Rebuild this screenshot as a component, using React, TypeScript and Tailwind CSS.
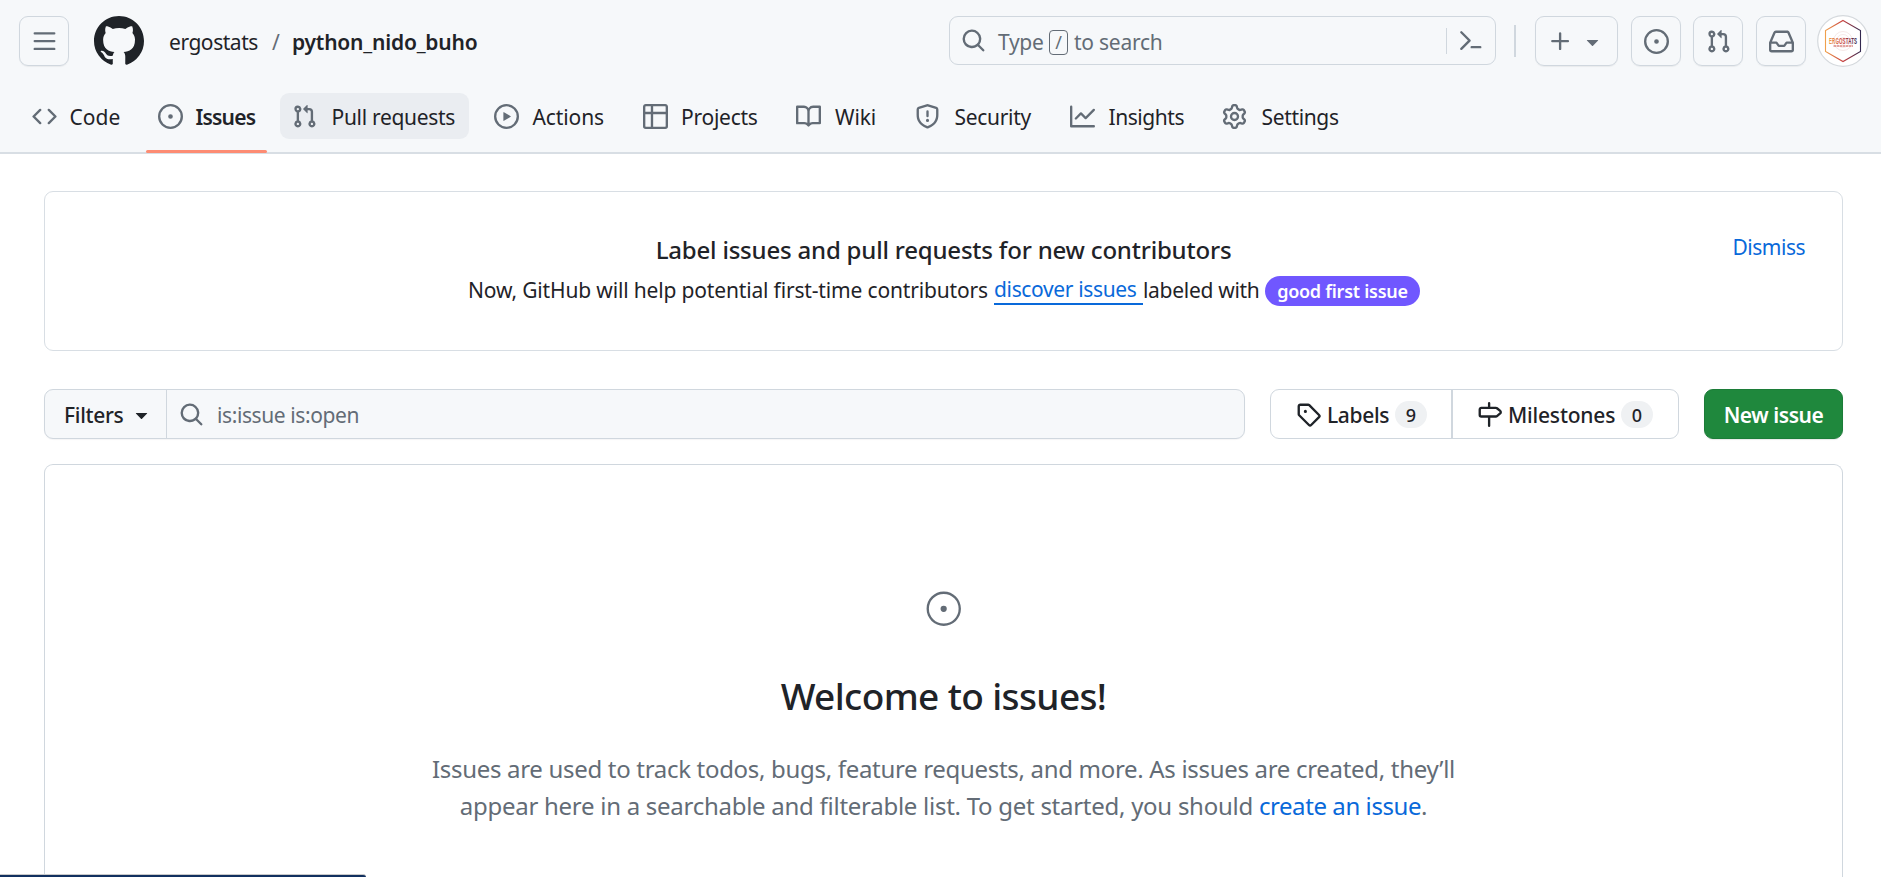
import type { ReactNode } from "react";

const paths = {
  menu: "M1 2.75A.75.75 0 0 1 1.75 2h12.5a.75.75 0 0 1 0 1.5H1.75A.75.75 0 0 1 1 2.75Zm0 5A.75.75 0 0 1 1.75 7h12.5a.75.75 0 0 1 0 1.5H1.75A.75.75 0 0 1 1 7.75ZM1.75 12h12.5a.75.75 0 0 1 0 1.5H1.75a.75.75 0 0 1 0-1.5Z",
  github: "M8 0c4.42 0 8 3.58 8 8a8.013 8.013 0 0 1-5.45 7.59c-.4.08-.55-.17-.55-.38 0-.27.01-1.13.01-2.2 0-.75-.25-1.23-.54-1.48 1.78-.2 3.65-.88 3.65-3.95 0-.88-.31-1.59-.82-2.15.08-.2.36-1.02-.08-2.12 0 0-.67-.22-2.2.82-.64-.18-1.32-.27-2-.27-.68 0-1.36.09-2 .27-1.53-1.03-2.2-.82-2.2-.82-.44 1.1-.16 1.92-.08 2.12-.51.56-.82 1.28-.82 2.15 0 3.06 1.86 3.75 3.64 3.95-.23.2-.44.55-.51 1.07-.46.21-1.61.55-2.33-.66-.15-.24-.6-.83-1.23-.82-.67.01-.27.38.01.53.34.19.73.9.82 1.13.16.45.68 1.31 2.69.94 0 .67.01 1.3.01 1.49 0 .21-.15.45-.55.38A7.995 7.995 0 0 1 0 8c0-4.42 3.58-8 8-8Z",
  code: "m11.28 3.22 4.25 4.25a.75.75 0 0 1 0 1.06l-4.25 4.25a.749.749 0 0 1-1.275-.326.749.749 0 0 1 .215-.734L13.94 8l-3.72-3.72a.749.749 0 0 1 .326-1.275.749.749 0 0 1 .734.215Zm-6.56 0a.751.751 0 0 1 1.042.018.751.751 0 0 1 .018 1.042L2.06 8l3.72 3.72a.749.749 0 0 1-.326 1.275.749.749 0 0 1-.734-.215L.47 8.53a.75.75 0 0 1 0-1.06Z",
  issue: "M8 9.5a1.5 1.5 0 1 0 0-3 1.5 1.5 0 0 0 0 3ZM8 0a8 8 0 1 1 0 16A8 8 0 0 1 8 0ZM1.5 8a6.5 6.5 0 1 0 13 0 6.5 6.5 0 0 0-13 0Z",
  pull: "M1.5 3.25a2.25 2.25 0 1 1 3 2.122v5.256a2.251 2.251 0 1 1-1.5 0V5.372A2.25 2.25 0 0 1 1.5 3.25Zm5.677-.177L9.573.677A.25.25 0 0 1 10 .854V2.5h1A2.5 2.5 0 0 1 13.5 5v5.628a2.251 2.251 0 1 1-1.5 0V5a1 1 0 0 0-1-1h-1v1.646a.25.25 0 0 1-.427.177L7.177 3.427a.25.25 0 0 1 0-.354ZM3.75 2.5a.75.75 0 1 0 0 1.5.75.75 0 0 0 0-1.5Zm0 9.5a.75.75 0 1 0 0 1.5.75.75 0 0 0 0-1.5Zm8.25.75a.75.75 0 1 0 1.5 0 .75.75 0 0 0-1.5 0Z",
  play: "M8 0a8 8 0 1 1 0 16A8 8 0 0 1 8 0ZM1.5 8a6.5 6.5 0 1 0 13 0 6.5 6.5 0 0 0-13 0Zm4.879-2.773 4.264 2.559a.25.25 0 0 1 0 .428l-4.264 2.559A.25.25 0 0 1 6 10.559V5.442a.25.25 0 0 1 .379-.215Z",
  table: "M0 1.75C0 .784.784 0 1.75 0h12.5C15.216 0 16 .784 16 1.75v12.5A1.75 1.75 0 0 1 14.25 16H1.75A1.75 1.75 0 0 1 0 14.25ZM6.5 6.5v8h7.75a.25.25 0 0 0 .25-.25V6.5Zm8-1.5V1.75a.25.25 0 0 0-.25-.25H6.5V5Zm-13 1.5v7.75c0 .138.112.25.25.25H5v-8ZM5 5V1.5H1.75a.25.25 0 0 0-.25.25V5Z",
  book: "M0 1.75A.75.75 0 0 1 .75 1h4.253c1.227 0 2.317.59 3 1.501A3.743 3.743 0 0 1 11.006 1h4.245a.75.75 0 0 1 .75.75v10.5a.75.75 0 0 1-.75.75h-4.507a2.25 2.25 0 0 0-1.591.659l-.622.621a.75.75 0 0 1-1.06 0l-.622-.621A2.25 2.25 0 0 0 5.258 13H.75a.75.75 0 0 1-.75-.75Zm7.251 10.324.004-5.073-.002-2.253A2.25 2.25 0 0 0 5.003 2.5H1.5v9h3.757a3.75 3.75 0 0 1 1.994.574ZM8.755 4.75l-.004 7.322a3.752 3.752 0 0 1 1.992-.572H14.5v-9h-3.495a2.25 2.25 0 0 0-2.25 2.25Z",
  shield: "M7.467.133a1.748 1.748 0 0 1 1.066 0l5.25 1.68A1.75 1.75 0 0 1 15 3.48V7c0 1.566-.32 3.182-1.303 4.682-.983 1.498-2.585 2.813-5.032 3.855a1.697 1.697 0 0 1-1.33 0c-2.447-1.042-4.049-2.357-5.032-3.855C1.32 10.182 1 8.566 1 7V3.48a1.75 1.75 0 0 1 1.217-1.667Zm.61 1.429a.25.25 0 0 0-.153 0l-5.25 1.68a.25.25 0 0 0-.174.238V7c0 1.358.275 2.666 1.057 3.86.784 1.194 2.121 2.34 4.366 3.297a.196.196 0 0 0 .154 0c2.245-.956 3.582-2.104 4.366-3.298C13.225 9.666 13.5 8.36 13.5 7V3.48a.251.251 0 0 0-.174-.237l-5.25-1.68ZM8.75 4.75v3a.75.75 0 0 1-1.5 0v-3a.75.75 0 0 1 1.5 0ZM9 10.5a1 1 0 1 1-2 0 1 1 0 0 1 2 0Z",
  graph: "M1.5 1.75V13.5h13.75a.75.75 0 0 1 0 1.5H.75a.75.75 0 0 1-.75-.75V1.75a.75.75 0 0 1 1.5 0Zm14.28 2.53-5.25 5.25a.75.75 0 0 1-1.06 0L7 7.06 4.28 9.78a.751.751 0 0 1-1.042-.018.751.751 0 0 1-.018-1.042l3.25-3.25a.75.75 0 0 1 1.06 0L10 7.94l4.72-4.72a.751.751 0 0 1 1.042.018.751.751 0 0 1 .018 1.042Z",
  gear: "M8 0a8.2 8.2 0 0 1 .701.031C9.444.095 9.99.645 10.16 1.29l.288 1.107c.018.066.079.158.212.224.231.114.454.243.668.386.123.082.233.09.299.071l1.103-.303c.644-.176 1.392.021 1.82.63.27.385.506.792.704 1.218.315.675.111 1.422-.364 1.891l-.814.806c-.049.048-.098.147-.088.294.016.257.016.515 0 .772-.01.147.038.246.088.294l.814.806c.475.469.679 1.216.364 1.891a7.977 7.977 0 0 1-.704 1.217c-.428.61-1.176.807-1.82.63l-1.102-.302c-.067-.019-.177-.011-.3.071a5.909 5.909 0 0 1-.668.386c-.133.066-.194.158-.211.224l-.29 1.106c-.168.646-.715 1.196-1.458 1.26a8.006 8.006 0 0 1-1.402 0c-.743-.064-1.289-.614-1.458-1.26l-.289-1.106c-.018-.066-.079-.158-.212-.224a5.738 5.738 0 0 1-.668-.386c-.123-.082-.233-.09-.299-.071l-1.103.303c-.644.176-1.392-.021-1.82-.63a8.12 8.12 0 0 1-.704-1.218c-.315-.675-.111-1.422.363-1.891l.815-.806c.05-.048.098-.147.088-.294a6.214 6.214 0 0 1 0-.772c.01-.147-.038-.246-.088-.294l-.815-.806C.635 6.045.431 5.298.746 4.623a7.92 7.92 0 0 1 .704-1.217c.428-.61 1.176-.807 1.82-.63l1.102.302c.067.019.177.011.3-.071.214-.143.437-.272.668-.386.133-.066.194-.158.211-.224l.29-1.106C6.009.645 6.556.095 7.299.03 7.53.01 7.764 0 8 0Zm-.571 1.525c-.036.003-.108.036-.137.146l-.289 1.105c-.147.561-.549.967-.998 1.189-.173.086-.34.183-.5.29-.417.278-.97.423-1.529.27l-1.103-.303c-.109-.03-.175.016-.195.045-.22.312-.412.644-.573.99-.014.031-.021.11.059.19l.815.806c.411.406.562.957.53 1.456a4.709 4.709 0 0 0 0 .582c.032.499-.119 1.05-.53 1.456l-.815.806c-.081.08-.073.159-.059.19.162.346.353.677.573.989.02.03.085.076.195.046l1.102-.303c.56-.153 1.113-.008 1.53.27.161.107.328.204.501.29.447.222.85.629.997 1.189l.289 1.105c.029.109.101.143.137.146a6.6 6.6 0 0 0 1.142 0c.036-.003.108-.036.137-.146l.289-1.105c.147-.561.549-.967.998-1.189.173-.086.34-.183.5-.29.417-.278.97-.423 1.529-.27l1.103.303c.109.029.175-.016.195-.045.22-.313.411-.644.573-.99.014-.031.021-.11-.059-.19l-.815-.806c-.411-.406-.562-.957-.53-1.456a4.709 4.709 0 0 0 0-.582c-.032-.499.119-1.05.53-1.456l.815-.806c.081-.08.073-.159.059-.19a6.464 6.464 0 0 0-.573-.989c-.02-.03-.085-.076-.195-.046l-1.102.303c-.56.153-1.113.008-1.53-.27a4.44 4.44 0 0 0-.501-.29c-.447-.222-.85-.629-.997-1.189l-.289-1.105c-.029-.11-.101-.143-.137-.146a6.6 6.6 0 0 0-1.142 0ZM11 8a3 3 0 1 1-6 0 3 3 0 0 1 6 0ZM9.5 8a1.5 1.5 0 1 0-3.001.001A1.5 1.5 0 0 0 9.5 8Z",
  search: "M10.68 11.74a6 6 0 0 1-7.922-8.982 6 6 0 0 1 8.982 7.922l3.04 3.04a.749.749 0 0 1-.326 1.275.749.749 0 0 1-.734-.215ZM11.5 7a4.499 4.499 0 1 0-8.997 0A4.499 4.499 0 0 0 11.5 7Z",
  inbox: "M2.8 2.06A1.75 1.75 0 0 1 4.41 1h7.18c.7 0 1.333.417 1.61 1.06l2.74 6.395c.04.093.06.194.06.295v4.5A1.75 1.75 0 0 1 14.25 15H1.75A1.75 1.75 0 0 1 0 13.25v-4.5c0-.101.02-.202.06-.295Zm1.61.44a.25.25 0 0 0-.23.152L1.887 8H4.75a.75.75 0 0 1 .6.3L6.625 10h2.75l1.275-1.7a.75.75 0 0 1 .6-.3h2.863L11.82 2.652a.25.25 0 0 0-.23-.152Zm10.09 7h-2.875l-1.275 1.7a.75.75 0 0 1-.6.3h-3.5a.75.75 0 0 1-.6-.3L4.375 9.5H1.5v3.75c0 .138.112.25.25.25h12.5a.25.25 0 0 0 .25-.25Z",
  plus: "M7.75 2a.75.75 0 0 1 .75.75V7h4.25a.75.75 0 0 1 0 1.5H8.5v4.25a.75.75 0 0 1-1.5 0V8.5H2.75a.75.75 0 0 1 0-1.5H7V2.75A.75.75 0 0 1 7.75 2Z",
  caret: "m4.427 7.427 3.396 3.396a.25.25 0 0 0 .354 0l3.396-3.396A.25.25 0 0 0 11.396 7H4.604a.25.25 0 0 0-.177.427Z",
  tag: "M1 7.775V2.75C1 1.784 1.784 1 2.75 1h5.025c.464 0 .91.184 1.238.513l6.25 6.25a1.75 1.75 0 0 1 0 2.474l-5.026 5.026a1.75 1.75 0 0 1-2.474 0l-6.25-6.25A1.752 1.752 0 0 1 1 7.775Zm1.5 0c0 .066.026.13.073.177l6.25 6.25a.25.25 0 0 0 .354 0l5.025-5.025a.25.25 0 0 0 0-.354l-6.25-6.25a.25.25 0 0 0-.177-.073H2.75a.25.25 0 0 0-.25.25ZM6 5a1 1 0 1 1 0 2 1 1 0 0 1 0-2Z",
  milestone: "M7.75 0a.75.75 0 0 1 .75.75V3h3.634c.414 0 .814.147 1.13.414l2.07 1.75a1.75 1.75 0 0 1 0 2.672l-2.07 1.75a1.75 1.75 0 0 1-1.13.414H8.5v5.25a.75.75 0 0 1-1.5 0V10H2.75A1.75 1.75 0 0 1 1 8.25v-3.5C1 3.784 1.784 3 2.75 3H7V.75A.75.75 0 0 1 7.75 0Zm4.384 8.5a.25.25 0 0 0 .161-.06l2.07-1.75a.248.248 0 0 0 0-.38l-2.07-1.75a.25.25 0 0 0-.161-.06H2.75a.25.25 0 0 0-.25.25v3.5c0 .138.112.25.25.25h9.384Z",
  terminal: "m6.354 8.04-4.773 4.773a.75.75 0 1 0 1.061 1.06L7.945 8.57a.75.75 0 0 0 0-1.06L2.642 2.206a.75.75 0 0 0-1.06 1.061L6.353 8.04ZM8.75 11.5a.75.75 0 0 0 0 1.5h5.5a.75.75 0 0 0 0-1.5h-5.5Z",
};

function Icon({ name, className = "size-[25px]" }: { name: keyof typeof paths; className?: string }) {
  return (
    <svg viewBox="0 0 16 16" fill="currentColor" className={`shrink-0 ${className}`} aria-hidden="true">
      <path d={paths[name]} fillRule="evenodd" />
    </svg>
  );
}

function HeaderButton({ children, className = "w-[50px]" }: { children: ReactNode; className?: string }) {
  return (
    <button
      className={`flex h-[50px] shrink-0 items-center justify-center rounded-[9px] border border-[#d0d7de] text-[#636c76] shadow-[0_1px_1px_rgba(31,35,40,0.06)] ${className}`}
    >
      {children}
    </button>
  );
}

const tabs: { icon: keyof typeof paths; label: string; text: string; state?: "active" | "hover" }[] = [
  { icon: "code", label: "Code", text: "w-[51px]" },
  { icon: "issue", label: "Issues", text: "w-[59px] font-semibold tracking-[-0.8px]", state: "active" },
  { icon: "pull", label: "Pull requests", text: "w-[127px] tracking-[-0.3px] pl-[2px]", state: "hover" },
  { icon: "play", label: "Actions", text: "w-[73.5px] pl-px tracking-[-0.1px]" },
  { icon: "table", label: "Projects", text: "w-[78px] pl-px tracking-[-0.25px]" },
  { icon: "book", label: "Wiki", text: "w-[44.5px] pl-[2px] tracking-[-0.1px]" },
  { icon: "shield", label: "Security", text: "w-[80px] pl-[2px] tracking-[-0.3px]" },
  { icon: "graph", label: "Insights", text: "w-[77px] pl-px tracking-[-0.45px]" },
  { icon: "gear", label: "Settings", text: "w-[80px] pl-[2px] tracking-[-0.35px]" },
];

function Header() {
  return (
    <header className="flex h-[154px] shrink-0 flex-col border-b-2 border-[#d8dee4] bg-[#f6f8fa]">
      <div className="flex h-[82px] shrink-0 items-center pl-[19px] pr-3">
        <HeaderButton>
          <Icon name="menu" />
        </HeaderButton>
        <Icon name="github" className="ml-[25px] size-[50px] text-[#1f2328]" />
        <div className="ml-[25px] flex items-center pt-[2px]">
          <span className="w-[103px] tracking-[-0.45px]">ergostats</span>
          <span className="w-[20px] text-[#636c76]">/</span>
          <span className="font-semibold tracking-[-0.2px]">python_nido_buho</span>
        </div>
        <div className="ml-auto flex items-center">
          <div className="mb-px flex h-[49px] w-[547px] items-center rounded-[9px] border border-[#d0d7de] text-[#636c76]">
            <Icon name="search" className="ml-[11px] size-[25px]" />
            <div className="ml-[12px] flex items-center">
              <span className="w-[51px] pt-[3px] tracking-[-0.3px]">Type</span>
              <span className="mt-[3px] flex h-[25px] w-[19px] items-center justify-center rounded-[4px] border border-[#636c76] text-[18px] leading-none">
                /
              </span>
              <span className="ml-[6px] pt-[3px] tracking-[-0.25px]">to search</span>
            </div>
            <div className="ml-auto mr-[12px] flex h-[26px] items-center border-l border-[#d0d7de] pl-[11px]">
              <Icon name="terminal" />
            </div>
          </div>
          <div className="ml-[18px] mr-[19px] h-[32px] w-[2px] bg-[#d0d7de]" />
          <HeaderButton className="w-[83px] gap-[7px]">
            <Icon name="plus" />
            <Icon name="caret" />
          </HeaderButton>
          <HeaderButton className="ml-[13px] w-[50px]">
            <Icon name="issue" />
          </HeaderButton>
          <HeaderButton className="ml-3 w-[50px]">
            <Icon name="pull" />
          </HeaderButton>
          <HeaderButton className="ml-[13px] w-[50px]">
            <Icon name="inbox" />
          </HeaderButton>
          <Avatar />
        </div>
      </div>
      <nav className="flex h-[70px] shrink-0 items-start gap-[12.5px] pl-[19.5px] pt-[11px]">
        {tabs.map((tab) => (
          <a key={tab.label} className="relative flex h-[60px] shrink-0 items-start">
            <span
              className={`flex h-[46px] items-center gap-[12.5px] rounded-[9px] px-[12.5px] ${
                tab.state === "hover" ? "bg-[#eaedf1]" : ""
              }`}
            >
              <Icon name={tab.icon} className="size-[25px] text-[#636c76]" />
              <span className={`whitespace-nowrap pt-[2px] ${tab.text}`}>{tab.label}</span>
            </span>
            {tab.state === "active" && (
              <span className="absolute inset-x-0 bottom-0 h-[3px] rounded-[2px] bg-[#fd8c73]" />
            )}
          </a>
        ))}
      </nav>
    </header>
  );
}

function Avatar() {
  return (
    <svg viewBox="0 0 52 52" className="ml-[11px] size-[52px] shrink-0" aria-label="ergostats">
      <defs>
        <linearGradient id="brand" x1="0" x2="1" y1="0" y2="0">
          <stop offset="0" stopColor="#f0a04b" />
          <stop offset="0.5" stopColor="#c8403f" />
          <stop offset="1" stopColor="#33284f" />
        </linearGradient>
      </defs>
      <circle cx="26" cy="26" r="25.3" fill="#fff" stroke="#d5d9dd" strokeWidth="1.2" />
      <g fill="none" stroke="#f0dedc" strokeWidth="0.7">
        <circle cx="26" cy="26" r="3.5" />
        <circle cx="26" cy="26" r="6.5" />
        <circle cx="26" cy="26" r="9.5" />
      </g>
      <path d="M26 5.5 43.5 15.500V36.500L26 46.500 8.500 36.500V15.500Z" fill="none" stroke="url(#brand)" strokeWidth="1.1" />
      <text
        transform="translate(12 29) scale(1 1.9)"
        textLength="28"
        fill="url(#brand)"
        className="font-['Liberation_Sans',sans-serif] text-[4.400px] font-bold"
      >
        ERGOSTATS
      </text>
      <path d="M16.500 31H36" stroke="#c8504a" strokeWidth="1" strokeDasharray="2.500 0.500" />
    </svg>
  );
}

function ContributorBanner() {
  return (
    <section className="flex h-[160px] flex-col items-center rounded-[9px] border border-[#d8dee4] px-[38px]">
      <div className="mt-[36px] grid h-[44px] w-full grid-cols-[1fr_auto_1fr] items-center">
        <span />
        <h2 className="text-[24px] font-medium tracking-[-0.2px]">
          Label issues and pull requests for new contributors
        </h2>
        <a className="-mr-px justify-self-end pb-[7px] tracking-[-0.5px] text-[#0969da]">Dismiss</a>
      </div>
      <p className="-mt-px flex h-[37px] items-center whitespace-nowrap">
        <span className="w-[527px] pl-px tracking-[-0.16px]">Now, GitHub will help potential first-time contributors</span>
        <a className="mt-[2px] h-[29px] w-[149px] border-b-2 border-[#0969da] leading-[26px] tracking-[-0.35px] text-[#0969da]">
          discover issues
        </a>
        <span className="w-[122px] tracking-[-0.3px]">labeled with</span>
        <span className="mt-[2px] flex h-[30px] w-[155px] items-center justify-center rounded-full bg-[#7057ff] text-[18px] font-semibold tracking-[-0.25px] text-white">
          good first issue
        </span>
      </p>
    </section>
  );
}

function Count({ value }: { value: number }) {
  return (
    <span className="flex h-[27px] w-[32px] items-center justify-center rounded-full bg-[#eff1f3] pt-px text-[18px]">
      {value}
    </span>
  );
}

function Toolbar() {
  return (
    <div className="mt-[38px] flex h-[50px]">
      <div className="flex flex-1 rounded-[9px] border border-[#d0d7de] bg-[#f6f8fa] shadow-[0_1px_1px_rgba(31,35,40,0.04)]">
        <button className="flex w-[122px] items-center border-r border-[#d0d7de] pl-[19px] font-medium">
          <span className="w-[65px] pt-[2px] text-left tracking-[-0.3px]">Filters</span>
          <Icon name="caret" />
        </button>
        <div className="flex items-center pl-[12px] text-[#636c76]">
          <Icon name="search" />
          <span className="ml-[13px] pt-[2px] tracking-[-0.4px]">is:issue is:open</span>
        </div>
      </div>
      <div className="ml-[25px] flex w-[409px] rounded-[9px] border border-[#d0d7de] font-medium">
        <a className="flex w-[182px] items-center border-r-2 border-[#d0d7de] pl-[25px]">
          <Icon name="tag" />
          <span className="ml-[6px] w-[68px] pt-px tracking-[-0.35px]">Labels</span>
          <Count value={9} />
        </a>
        <a className="flex flex-1 items-center pl-[24px]">
          <Icon name="milestone" />
          <span className="ml-[6px] w-[113px] pt-px tracking-[-0.2px]">Milestones</span>
          <Count value={0} />
        </a>
      </div>
      <button className="ml-[25px] w-[139px] rounded-[9px] border border-[#1c7c38] bg-[#1f883d] pt-[2px] font-semibold tracking-[-0.45px] text-white shadow-[0_1px_1px_rgba(31,35,40,0.1)]">
        New issue
      </button>
    </div>
  );
}

function EmptyState() {
  return (
    <section className="mt-[25px] flex flex-1 flex-col items-center rounded-t-[9px] border border-b-0 border-[#d0d7de]">
      <svg viewBox="0 0 24 24" fill="currentColor" className="mt-[125px] size-[37.5px] shrink-0 text-[#636c76]" aria-hidden="true">
        <path
          fillRule="evenodd"
          d="M12 1c6.075 0 11 4.925 11 11s-4.925 11-11 11S1 18.075 1 12 5.925 1 12 1ZM2.500 12a9.500 9.500 0 0 0 9.500 9.500 9.500 9.500 0 0 0 9.500-9.500A9.500 9.500 0 0 0 12 2.500 9.500 9.500 0 0 0 2.500 12Zm9.500 2a2 2 0 1 1-.001-3.999A2 2 0 0 1 12 14Z"
        />
      </svg>
      <h1 className="mt-[40px] text-[37px] font-medium leading-[56px] tracking-[-0.62px]">Welcome to issues!</h1>
      <p className="mt-[26px] whitespace-nowrap text-center text-[24px] leading-[37.5px] tracking-[-0.31px] text-[#636c76]">
        Issues are used to track todos, bugs, feature requests, and more. As issues are created, they’ll
        <br />
        <span className="tracking-[-0.27px]">
          appear here in a searchable and filterable list. To get started, you should{" "}
        </span>
        <a className="tracking-[-0.42px] text-[#0969da]">create an issue</a>.
      </p>
    </section>
  );
}

export default function App() {
  return (
    <div className="relative flex h-[877px] w-full flex-col overflow-hidden bg-white font-['Noto_Sans','Open_Sans',sans-serif] text-[21px] leading-[30px] text-[#1f2328]">
      <Header />
      <main className="flex flex-1 flex-col pl-[44px] pr-[38px] pt-[37px]">
        <ContributorBanner />
        <Toolbar />
        <EmptyState />
      </main>
      <div className="absolute bottom-0 left-0 h-[3px] w-[366px] rounded-tr-[3px] border-t border-[#c9c9c9] bg-[#11305f]" />
    </div>
  );
}
